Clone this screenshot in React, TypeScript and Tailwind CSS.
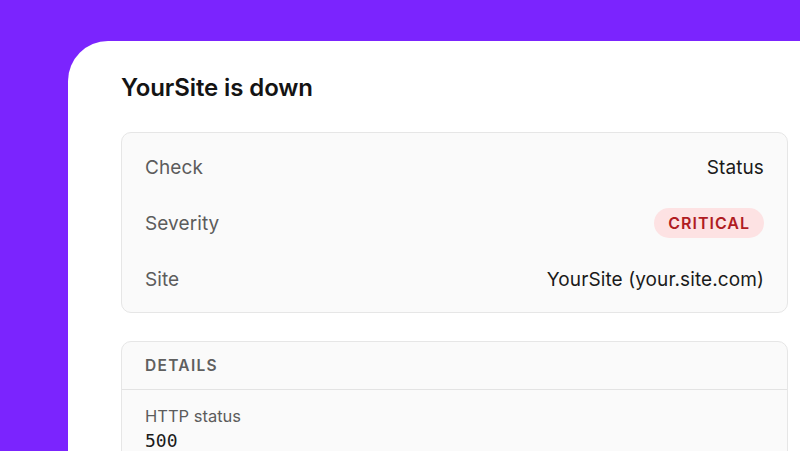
const rows = [
  { label: "Check", value: "Status" },
  { label: "Severity", value: "CRITICAL", badge: true },
  { label: "Site", value: "YourSite (your.site.com)" },
];

export default function App() {
  return (
    <div
      className="w-[800px] h-[451px] overflow-hidden bg-[#7b24fe] pt-[41px] pl-[68px]"
      style={{ fontFamily: "Inter, 'Noto Sans', sans-serif" }}
    >
      <div className="w-[774px] h-[420px] bg-white rounded-tl-[40px] pl-[53px] pt-[32px]">
        <h1 className="text-[24px] leading-[30px] font-semibold text-[#141414] tracking-[-0.1px]">
          YourSite is down
        </h1>

        <div className="mt-[29px] w-[667px] rounded-[10px] border border-[#e6e6e6] bg-[#fafafa] pt-[19px] pb-[18px] px-[23px] flex flex-col gap-[26px]">
          {rows.map((r) => (
            <div key={r.label} className="h-[30px] flex items-center justify-between text-[19px] tracking-[0.1px]">
              <span className="pt-[2px] text-[#5c5c5c]">{r.label}</span>
              {r.badge ? (
                <span className="h-[30px] px-[14px] flex items-center rounded-full bg-[#fde2e3] text-[#b01c22] text-[16px] font-semibold tracking-[1px]">
                  {r.value}
                </span>
              ) : (
                <span className="pt-[2px] text-[#1a1a1a]">{r.value}</span>
              )}
            </div>
          ))}
        </div>

        <div className="mt-[28px] w-[667px] rounded-t-[10px] border border-[#e6e6e6] bg-[#fafafa]">
          <div className="h-[48px] flex items-center px-[23px] border-b border-[#e3e3e3]">
            <span className="text-[15.5px] font-semibold tracking-[1.3px] text-[#5f5f5f]">DETAILS</span>
          </div>
          <div className="px-[23px] pt-[15px] pb-[20px]">
            <div className="text-[16.5px] leading-[22px] text-[#5c5c5c]">HTTP status</div>
            <div
              className="mt-[3px] text-[18px] leading-[22px] text-[#1a1a1a]"
              style={{ fontFamily: "'DejaVu Sans Mono', monospace" }}
            >
              500
            </div>
          </div>
        </div>
      </div>
    </div>
  );
}
